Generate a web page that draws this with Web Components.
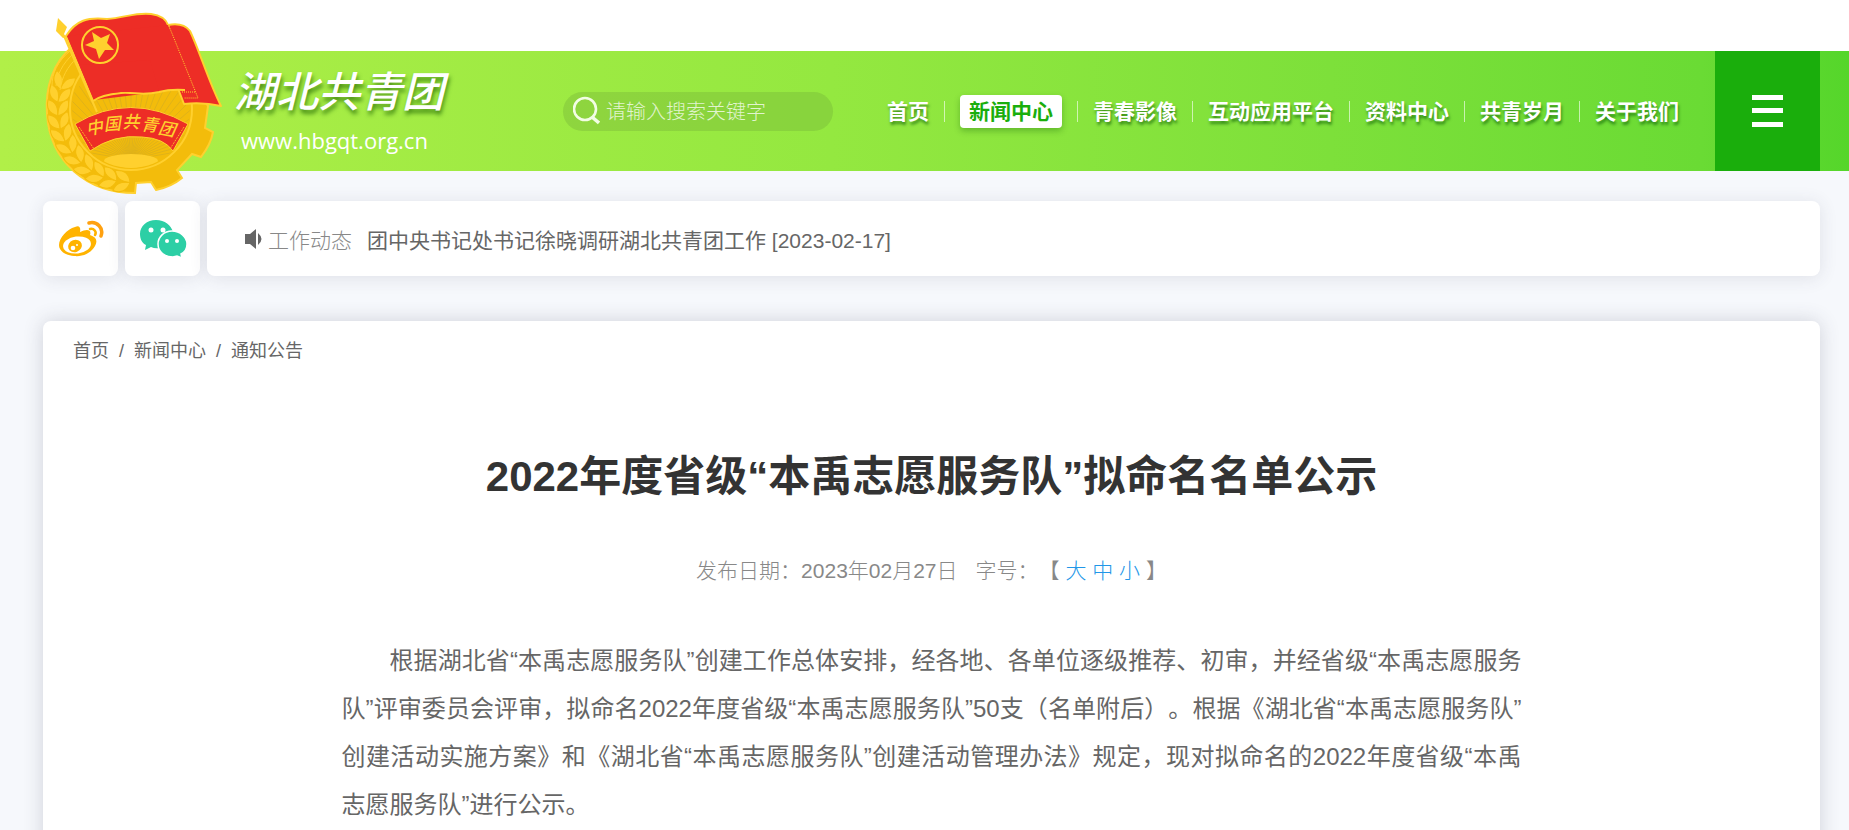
<!DOCTYPE html>
<html lang="zh-CN">
<head>
<meta charset="utf-8">
<title>湖北共青团</title>
<style>
  * { box-sizing: border-box; }
  body {
    margin: 0;
    background: #f6f8fc;
    color: #666;
    font-family: "Liberation Sans", "Noto Sans CJK SC", sans-serif;
    font-size: 21px;
    text-spacing-trim: space-all;
  }
  ::-webkit-scrollbar { display: none; }
</style>
</head>
<body>
<site-header>
  <league-emblem slot="emblem"></league-emblem>
  <search-box slot="search"></search-box>
  <main-nav slot="nav" active="1"></main-nav>
</site-header>
<news-bar label="工作动态">
  <a href="#news">团中央书记处书记徐晓调研湖北共青团工作 [2023-02-17]</a>
</news-bar>
<article-panel>
  <bread-crumb slot="crumb" items="首页,新闻中心,通知公告"></bread-crumb>
  <span slot="title">2022年度省级“本禹志愿服务队”拟命名名单公示</span>
  <article-meta slot="meta" date="2023年02月27日"></article-meta>
  <p>根据湖北省“本禹志愿服务队”创建工作总体安排，经各地、各单位逐级推荐、初审，并经省级“本禹志愿服务队”评审委员会评审，拟命名2022年度省级“本禹志愿服务队”50支（名单附后）。根据《湖北省“本禹志愿服务队”创建活动实施方案》和《湖北省“本禹志愿服务队”创建活动管理办法》规定，现对拟命名的2022年度省级“本禹志愿服务队”进行公示。</p>
</article-panel>

<script>
class BaseElement extends HTMLElement {
  constructor() {
    super();
    this.attachShadow({ mode: 'open' });
  }

  connectedCallback() {
    this.shadowRoot.innerHTML = /* html */`
    <style>
      * { box-sizing: border-box; }
      a { color: inherit; text-decoration: none; }
      ${this.constructor.styles}
    </style>
    ${this.render()}`;
  }
}

class LeagueEmblem extends BaseElement {
  static get styles() {
    return /* css */`
    :host { display: block; width: 220px; height: 200px; }
    svg { display: block; width: 100%; height: 100%; }
    text { font-family: "Noto Sans CJK SC", sans-serif; font-size: 17px; font-weight: 500; font-style: italic; }
  `;
  }

  // rays of the rising sun, fanned around the emblem centre
  rays() {
    const rays = [];
    for (let a = 190; a <= 350; a += 5) {
      const x = 101 + 90 * Math.cos(a * Math.PI / 180);
      const y = 160 + 90 * Math.sin(a * Math.PI / 180);
      rays.push(`<path d="M101 160L${x.toFixed(1)} ${y.toFixed(1)}"/>`);
    }
    return rays.join('');
  }

  wheat() {
    const grains = [];
    for (let i = 0; i < 11; i += 1) {
      const a = 202 - i * 10.5;
      const x = 101 + 73 * Math.cos(a * Math.PI / 180);
      const y = 109 + 73 * Math.sin(a * Math.PI / 180);
      grains.push(`<g transform="translate(${x.toFixed(1)} ${y.toFixed(1)}) rotate(${a - 180})">
        <path d="M0 8C-9 6-12 0-10-8C-3-6 0-2 0 8Z"/><path d="M0 8C9 6 12 0 10-8C3-6 0-2 0 8Z"/></g>`);
    }
    return grains.join('');
  }

  render() {
    return /* html */`
    <svg viewBox="0 0 220 200" role="img" aria-label="团徽">
      <defs><clipPath id="disc"><circle cx="101" cy="109" r="59"/></clipPath></defs>
      <path fill="#f3bc0b" stroke="#ffd02e" stroke-width="2" d="M42 47C23 62 15 88 17 114C20 162 57 193 105 193L106 183L121 182L126 190Q141 187 152 178L147 170L162 154L171 157Q181 144 183 132L175 128L178 106L151 65Z"/>
      <g fill="#ffd02e" stroke="#f3bc0b" stroke-width="1">${this.wheat()}</g>
      <circle cx="101" cy="109" r="61" fill="#f3bc0b" stroke="#ffd02e" stroke-width="2"/>
      <g clip-path="url(#disc)">
        <g stroke="#dfb21a" stroke-width="1">${this.rays()}</g>
        <ellipse cx="101" cy="161" rx="27" ry="7" fill="#ffd02e"/>
      </g>
      <path fill="none" stroke="#ffd02e" d="M41 50C27 62 22 73 22 86M44 53C32 64 27 75 26 86M47 58C37 67 32 77 30 90"/>
      <path fill="#ed2d26" stroke="#ffd02e" d="M45 124Q100 91 158 124L143 151Q134 138 112 137Q84 134 60 151Z"/>
      <path fill="none" stroke="#ffb026" stroke-dasharray="2 1" d="M49 127L64 149M154 127L140 149"/>
      <g fill="#ffd02e" text-anchor="middle">
        <text x="64" y="134" transform="rotate(-10 64 126)">中</text>
        <text x="82" y="130" transform="rotate(-5 82 122)">国</text>
        <text x="101" y="128">共</text>
        <text x="120" y="131" transform="rotate(6 120 124)">青</text>
        <text x="137" y="135" transform="rotate(10 137 128)">团</text>
      </g>
      <path fill="#ed2d26" stroke="#ffd02e" stroke-width="2" stroke-linejoin="round" d="M138 25Q153 22 160 31C170 52 178 80 191 106Q173 102 154 104L149 91Z"/>
      <path fill="#ed2d26" stroke="#ffd02e" stroke-width="2" stroke-linejoin="round" d="M63 101L36 36C46 20 58 17 77 19C94 18 106 12 121 14Q135 16 138 25"/>
      <path fill="#ed2d26" d="M37 36L138 25L168 97L154 99L150 90C140 89 135 90 129 92L64 100Z"/>
      <path fill="none" stroke="#ffd02e" stroke-width="2" d="M63 101Q71 95 91 93C105 92 112 96 129 92Q140 89 155 90"/>
      <path fill="#ed2d26" d="M60 90Q71 94 91 92L129 91L120 60L50 65Z"/>
      <path fill="none" stroke="#ffd02e" stroke-dasharray="1 1" d="M139 26L168 98H154M152 92H166"/>
      <path fill="#ffd02e" d="M28 18L37 27L34 34L36 37L33 38L26 31Z"/>
      <path stroke="#ffd02e" stroke-width="2" d="M34 36L67 112"/>
      <circle cx="70" cy="45" r="18" fill="none" stroke="#ffd02e" stroke-width="2"/>
      <path fill="#ffd02e" d="M62 32L71 38L80 34L77 43L84 50L75 50L69 59L66 49L55 45L64 41Z"/>
    </svg>`;
  }
}

class SearchBox extends BaseElement {
  static get styles() {
    return /* css */`
    :host { display: block; width: 270px; }
    form {
      display: flex;
      align-items: center;
      height: 39px;
      padding: 0 11px 0 10px;
      gap: 6px;
      border-radius: 20px;
      background: rgba(100, 150, 50, .25);
    }
    button { display: flex; flex: none; padding: 0; border: 0; background: none; }
    input {
      flex: 1;
      min-width: 0;
      padding: 2px 0 0;
      border: 0;
      outline: 0;
      background: none;
      color: #fff;
      font: inherit;
      font-size: 20px;
    }
    input::placeholder { color: rgba(255, 255, 255, .75); font-weight: 300; }
  `;
  }

  render() {
    return /* html */`
    <form onsubmit="return false">
      <button aria-label="搜索">
        <svg width="27" height="30" viewBox="0 0 27 30" fill="none" stroke="#f2fde4" stroke-width="2.6">
          <circle cx="12" cy="13" r="11"/><path d="M19 21L26 27" stroke-width="3.5"/>
        </svg>
      </button>
      <input type="text" aria-label="请输入搜索关键字" placeholder="请输入搜索关键字">
    </form>`;
  }
}

class MainNav extends BaseElement {
  static get styles() {
    return /* css */`
    :host { display: block; }
    nav { display: flex; align-items: center; }
    a {
      color: #fff;
      font-weight: 700;
      line-height: 33px;
      white-space: nowrap;
      text-shadow: 1px 3px 3px rgba(0, 80, 0, .6);
    }
    a.active {
      padding: 0 9px;
      border-radius: 4px;
      background: #fff;
      color: #1aae0c;
      text-shadow: none;
      box-shadow: 0 3px 6px rgba(0, 80, 0, .3);
    }
    i { width: 1px; height: 21px; margin: 0 15px; background: rgba(255, 255, 255, .6); }
  `;
  }

  render() {
    const active = +this.getAttribute('active');
    const items = ['首页', '新闻中心', '青春影像', '互动应用平台', '资料中心', '共青岁月', '关于我们'];
    const links = items.map((item, i) => `<a href="#${i}" class="${i === active ? 'active' : ''}">${item}</a>`);
    return `<nav>${links.join('<i></i>')}</nav>`;
  }
}

class SiteHeader extends BaseElement {
  static get styles() {
    return /* css */`
    :host { display: block; position: relative; padding-top: 51px; background: #fff; }
    header {
      display: flex;
      align-items: center;
      height: 120px;
      padding: 0 29px 0 234px;
      background: linear-gradient(90deg, #b1ef48, #94e840 45%, #7de03a 72%, #6adb34 92%, #55d62b);
    }
    ::slotted([slot="emblem"]) { position: absolute; left: 30px; top: 0; z-index: 1; }
    .brand { display: block; width: 230px; color: #fff; white-space: nowrap; }
    .name {
      display: block;
      font-family: "Noto Sans CJK SC", sans-serif;
      font-size: 42px;
      font-style: italic;
      font-weight: 500;
      line-height: 58px;
      text-shadow: 1px 4px 4px rgba(30, 100, 0, .7);
    }
    .url { display: block; padding-left: 7px; font-family: "Open Sans", sans-serif; font-size: 22px; line-height: 44px; }
    ::slotted([slot="search"]) { margin-left: 99px; }
    ::slotted([slot="nav"]) { margin-left: auto; margin-right: 36px; }
    button {
      display: flex;
      align-items: center;
      justify-content: center;
      width: 105px;
      height: 100%;
      padding: 0;
      border: 0;
      background: #1aae0c;
    }
  `;
  }

  render() {
    return /* html */`
    <slot name="emblem"></slot>
    <header>
      <a class="brand" href="#"><span class="name">湖北共青团</span><span class="url">www.hbgqt.org.cn</span></a>
      <slot name="search"></slot>
      <slot name="nav"></slot>
      <button aria-label="菜单">
        <svg width="31" height="32" viewBox="0 0 31 32" fill="#fff"><path d="M0 0H31V5H0ZM0 13H31V18H0ZM0 27H31V32H0Z"/></svg>
      </button>
    </header>`;
  }
}

class NewsBar extends BaseElement {
  static get styles() {
    return /* css */`
    :host { display: flex; gap: 7px; padding: 30px 29px 0 43px; }
    .box {
      display: flex;
      align-items: center;
      height: 75px;
      border-radius: 8px;
      background: #fff;
      box-shadow: 0 2px 18px rgba(60, 60, 80, .12);
    }
    .icon { flex: none; justify-content: center; width: 75px; }
    .news { flex: 1; padding: 0 38px; }
    .label { margin: 0 15px 0 6px; color: #888; font-weight: 300; }
    ::slotted(a) { color: #666; text-decoration: none; }
  `;
  }

  render() {
    return /* html */`
    <a class="box icon" href="#weibo" aria-label="微博">
      <svg width="46" height="38" viewBox="0 0 46 38">
        <path fill="#ffb300" d="M17 7C21 5 23 7 22 12C28 9 34 9 32 15C38 17 40 20 37 26C33 33 25 37 16 36C7 35 1 31 1 25C1 18 9 9 17 7Z"/>
        <ellipse cx="19" cy="25" rx="14" ry="8.5" fill="#fff" transform="rotate(-7 19 25)"/>
        <ellipse cx="17" cy="26" rx="7" ry="6" fill="#ffb300" transform="rotate(-20 17 26)"/>
        <circle cx="15" cy="28" r="2.3" fill="#fff"/><circle cx="19" cy="25" r="1" fill="#fff"/>
        <path fill="none" stroke="#ffa110" stroke-width="3.5" stroke-linecap="round" d="M31 3C39 1 46 8 43 16"/>
        <path fill="none" stroke="#ffb300" stroke-width="2.5" stroke-linecap="round" d="M32 9C36 8 39 12 37 15"/>
      </svg>
    </a>
    <a class="box icon" href="#wechat" aria-label="微信">
      <svg width="48" height="40" viewBox="0 0 48 40">
        <path fill="#2ccfa5" d="M17 1C8 1 1 7 1 15C1 20 3 24 7 26L6 31L12 28Q16 30 21 29L34 13C32 6 26 1 17 1Z"/>
        <path fill="#2ccfa5" stroke="#fff" stroke-width="1.5" d="M33 12C25 12 19 18 19 25C19 33 26 38 34 38L38 37L43 39L42 35C46 33 48 29 48 25C48 18 41 12 33 12Z"/>
        <g fill="#fff"><circle cx="12" cy="11" r="2.5"/><circle cx="24" cy="11" r="2.5"/><circle cx="28" cy="22" r="2"/><circle cx="38" cy="22" r="2"/></g>
      </svg>
    </a>
    <div class="box news">
      <svg width="17" height="20" viewBox="0 0 17 20" fill="#666"><path d="M0 5H5L11 0V20L5 15H0ZM13 4Q20 10 13 16Z"/></svg>
      <span class="label">${this.getAttribute('label')}</span>
      <slot></slot>
    </div>`;
  }
}

class BreadCrumb extends BaseElement {
  static get styles() {
    return /* css */`
    :host { display: block; font-size: 18px; line-height: 28px; }
    nav { display: flex; gap: 10px; }
  `;
  }

  render() {
    const links = this.getAttribute('items').split(',').map(item => `<a href="#">${item}</a>`);
    return `<nav>${links.join('<span>/</span>')}</nav>`;
  }
}

class ArticleMeta extends BaseElement {
  static get styles() {
    return /* css */`
    :host { display: flex; justify-content: center; color: #888; line-height: 32px; font-weight: 300; }
    .size { margin-left: 18px; }
    button { padding: 0; border: 0; background: none; color: #2196e8; font: inherit; }
  `;
  }

  render() {
    return /* html */`
    <span>发布日期：${this.getAttribute('date')}</span>
    <span class="size">字号：【 <button>大</button> <button>中</button> <button>小</button> 】</span>`;
  }
}

class ArticlePanel extends BaseElement {
  static get styles() {
    return /* css */`
    :host {
      display: block;
      margin: 45px 29px 0 43px;
      padding: 16px 30px 60px;
      border-radius: 8px;
      background: #fff;
      box-shadow: 0 0 20px rgba(60, 60, 80, .2);
    }
    h1 { margin: 82px 0 48px; color: #333; font-size: 42px; line-height: 60px; text-align: center; }
    .text { max-width: 1180px; margin: 50px auto 0; font-size: 24px; line-height: 48px; text-align: justify; }
    ::slotted(p) { margin: 0; text-indent: 2em; }
  `;
  }

  render() {
    return /* html */`
    <slot name="crumb"></slot>
    <h1><slot name="title"></slot></h1>
    <slot name="meta"></slot>
    <div class="text"><slot></slot></div>`;
  }
}

customElements.define('league-emblem', LeagueEmblem);
customElements.define('search-box', SearchBox);
customElements.define('main-nav', MainNav);
customElements.define('site-header', SiteHeader);
customElements.define('news-bar', NewsBar);
customElements.define('bread-crumb', BreadCrumb);
customElements.define('article-meta', ArticleMeta);
customElements.define('article-panel', ArticlePanel);
</script>
</body>
</html>
